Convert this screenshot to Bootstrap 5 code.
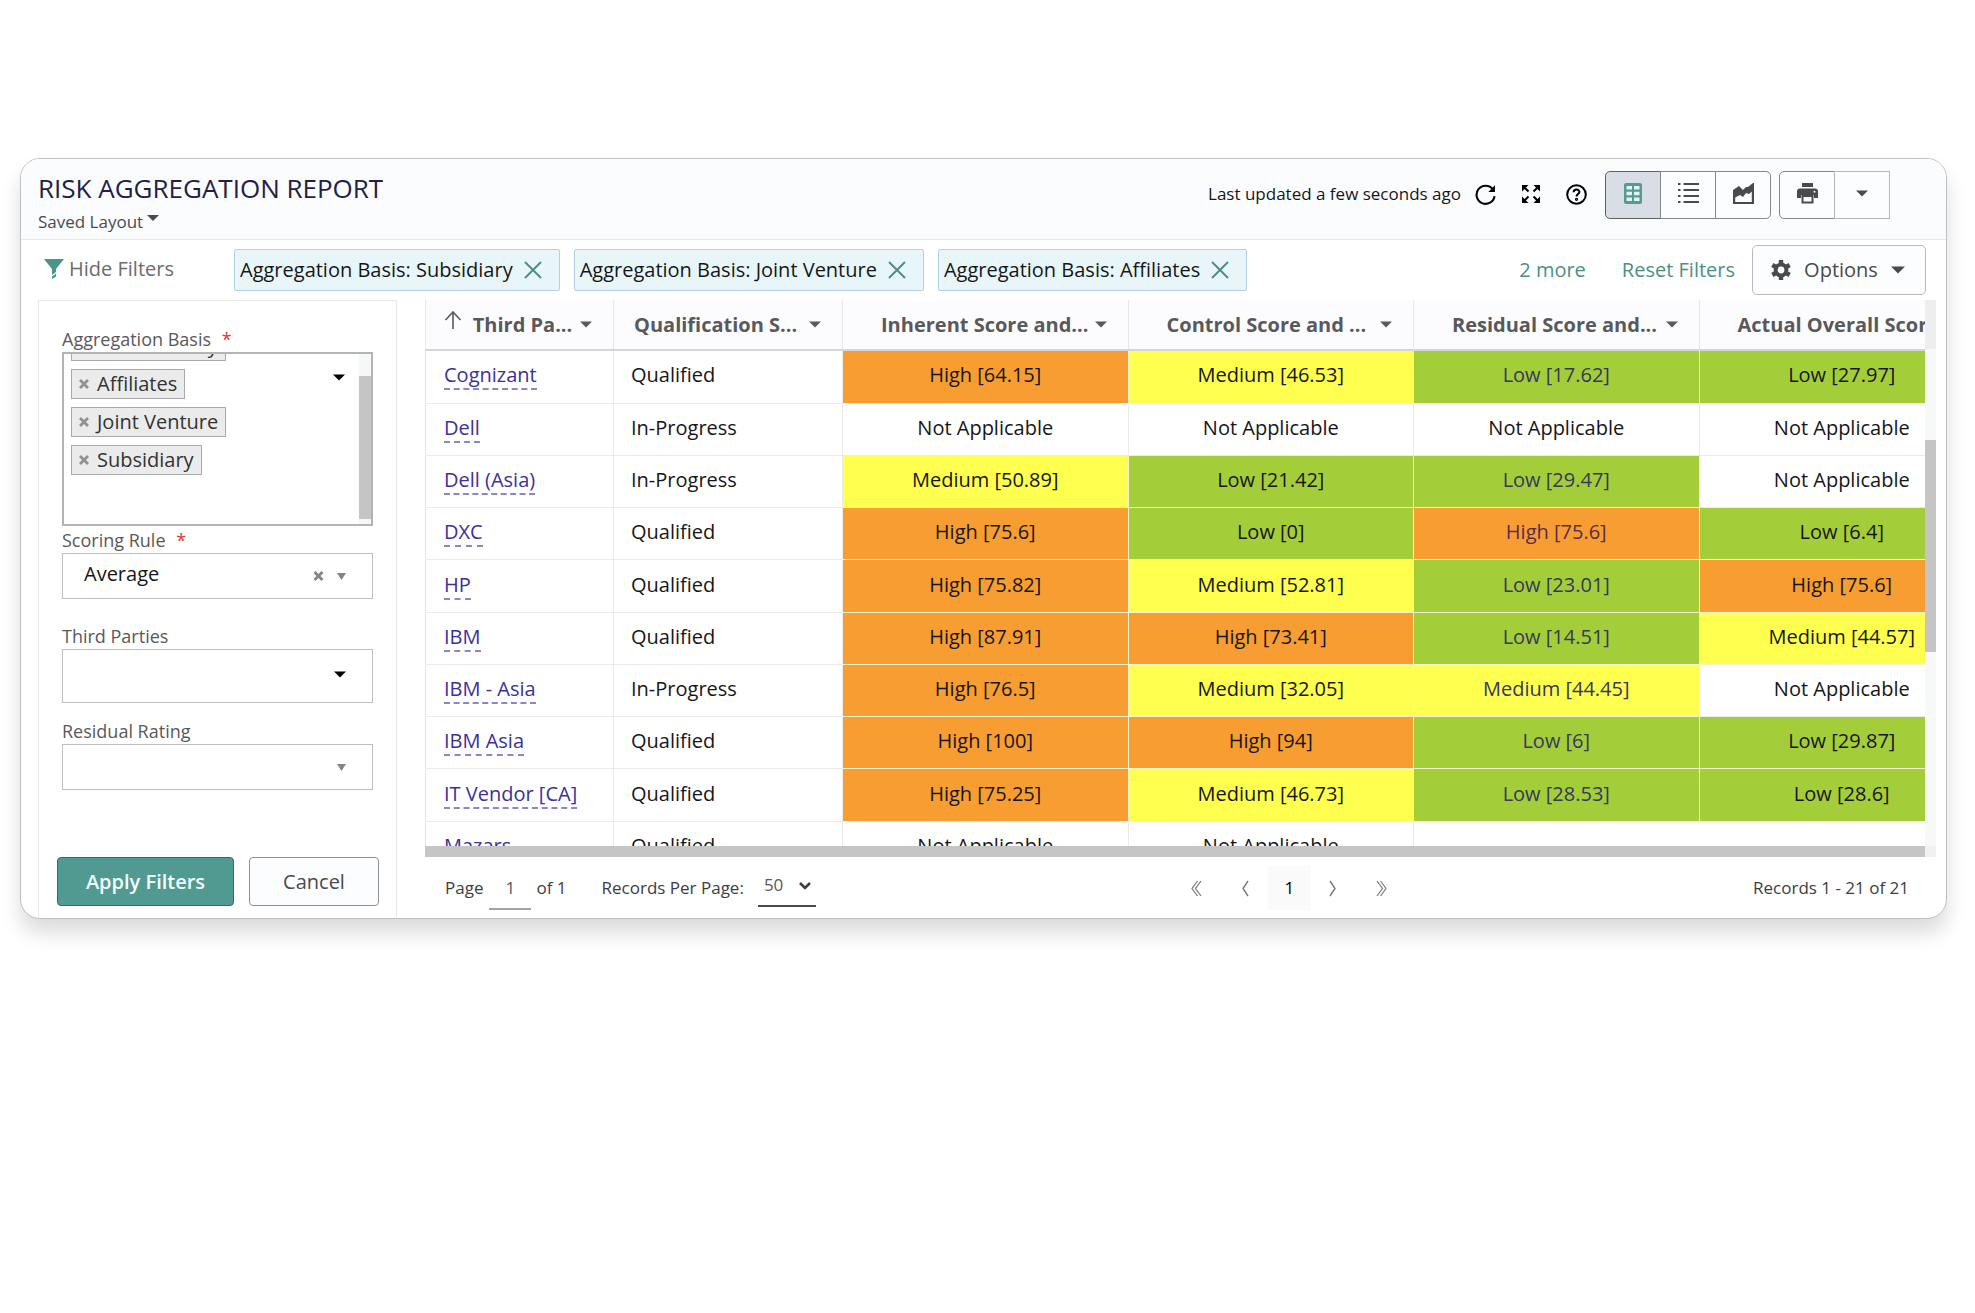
<!DOCTYPE html>
<html lang="en">
<head>
<meta charset="utf-8">
<meta name="viewport" content="width=device-width, initial-scale=1">
<title>Risk Aggregation Report</title>
<link href="https://cdn.jsdelivr.net/npm/bootstrap@5.3.0/dist/css/bootstrap.min.css" rel="stylesheet">
<style>
body{font-family:"Open Sans","Noto Sans",sans-serif;font-size:20px;line-height:28px;color:#161618;background:#fff}
svg{display:block;flex:none}
button{font:inherit;color:inherit}
.report{margin:158px 28px 60px 20px;border:1px solid #bfc0c2;border-radius:20px;background:#fff;overflow:hidden;box-shadow:0 14px 20px rgba(0,0,0,.14)}
.report-head{height:81px;padding:12px 56px 0 17px;background:#fbfcfe;border-bottom:1px solid #e3e9ec}
.report-title{font-size:26px;line-height:34px;font-weight:500;color:#231e46;margin:0 0 5px}
.text-sm17{font-size:17px;line-height:24px}
.saved{color:#4a4a4c;gap:4px}
.plain{border:0;background:none;padding:0}
.tool-set{height:48px}
.tool-set button{width:56px;height:48px;background:#fcfdff;border:1px solid #84888c;display:flex;align-items:center;justify-content:center;color:#4a4a4c;padding:0 0 4px}
.tool-set button+button{margin-left:-1px}
.tool-set button:first-child{border-radius:5px 0 0 5px}
.tool-set .end-round{border-radius:0 5px 5px 0}
.tool-set .pressed{background:#d9dee6;color:#549b92;border-color:#5d6166}
.tool-set .pale{border-color:#b4b8bc}
.status-set{gap:25px;padding-bottom:2px;margin-right:18px}
.status-set .stamp{margin-right:-11px}
.filter-bar{padding:5px 20px 5px 23px}
.hide-link{color:#6b6c6e;width:190px;gap:5px;padding-bottom:2px}
.tealink{color:#4c9083;text-decoration:none;margin-left:36px}
.chip{height:42px;padding:0 17px 0 5px;background:#e8f6f9;border:1px solid #b4d0dd;border-radius:2px;gap:11px}
.chip button{color:#4c9083}
.opt-btn{height:50px;width:174px;border:1px solid #b9babd;border-radius:5px;background:#fcfdff;color:#4a4a4c;padding:0 20px 0 18px;margin-left:17px;font-weight:500}
.side{width:359px;margin-left:17px;height:617px;border:1px solid #e8e9ea;border-bottom:0;padding:26px 23px 11px}
.side label,.side .lbl{font-size:18px;line-height:25px;color:#58595b;display:block}
.star{color:#e0343a;margin-left:6px}
.lb-a{margin-top:2px}.lb-b{margin-top:25px}.lb-c{margin-top:16px}
.box{border:1px solid #bdbebf;background:#fff}
.picker{height:174px;border-width:2px;border-color:#b3b4b5}
.picker-list{overflow:hidden;padding-left:7px}
.picker-tri{margin:20px 14px 0 0}
.tagbox{height:30px;border:1px solid #a9aaab;background:#ebebeb;font-size:20px;line-height:28px;color:#333;padding:0 7px 0 7px;gap:8px;margin-bottom:8px}
.tagbox:first-child{margin-top:-23px}
.tagbox svg{color:#909090}
.track{width:12px;background:#f6f7f7;padding:22px 0 5px}
.thumb{height:100%;background:#c5c5c5}
.pad-box{height:46px;padding:0 26px 0 16px}
.pad-box.tall{height:54px;padding-bottom:3px}
.pad-box select,.pad-box input{border:0;outline:0;appearance:none;background:none;color:#161618;width:0;flex:1;padding:0 4px 4px 5px;height:40px}
.clear-x{color:#858585;margin-right:13px}
.act-row{gap:15px;margin-left:-5px;margin-right:-7px}
.act{height:49px;border-radius:4px;font-size:20px}
.act-go{width:177px;background:#519a92;border:1px solid #2f6f66;color:#f4fffd;font-weight:600}
.act-no{width:130px;background:#fbfdff;border:1px solid #8f9193;color:#4a4a4c;font-weight:500}
.grid-area{margin-left:28px;margin-right:10px}
.grid-view{height:546px;overflow:hidden}
.grid-tbl{width:104%;height:574px;table-layout:fixed;border-collapse:collapse;margin:0}
.col-party{width:188px}.col-qual{width:229px}
.grid-tbl th{height:50px;background:#fcfcfe;border:1px solid #e6e7ea;border-top:0;border-bottom:2px solid #d5d6d8;color:#58595b;font-size:20px;font-weight:700;padding:0;white-space:nowrap}
.grid-tbl th span{display:flex;align-items:center;justify-content:space-between;padding:0 21px 0 38px}
.grid-tbl th .h-party{padding:0 21px 0 18px}
.grid-tbl th .h-qual{padding-left:20px}
.up-arrow{margin-bottom:10px;margin-right:3px}
.grid-tbl td{border:1px solid #ebebec;padding:0 0 3px 17px;white-space:nowrap}
.grid-tbl th:first-child,.grid-tbl td:first-child{border-left-color:#e6e7ea}
.grid-tbl td:first-child{padding-left:18px}
.grid-tbl td.sc{text-align:center;padding:0 0 3px;background-clip:padding-box}
.hi{background-color:#f89d31}.me{background-color:#feff4f}.lo{background-color:#a4cd3a}
.grid-tbl td.hi,.grid-tbl td.me,.grid-tbl td.lo{border-color:#f3f3d0}
.grid-tbl a{color:#3b3199;text-decoration:none;border-bottom:2px dashed #8c86c8}
.grid-tbl .rs{color:#36385e}
.grid-tbl .hi.rs{color:#5a2c50}
.vtrack{width:11px;background:#f7f8f8}
.vtop{height:49px;background:#eeeeee}
.vthumb{height:212px;margin-top:91px;background:#c5c5c5}
.htrack{height:11px;background:#c5c5c5;border-right:11px solid #f0f0f0}
.pager{padding:9px 27px 0 20px;height:61px;color:#3d3d3f}
.pager-in{width:42px;height:44px;border:0;border-bottom:2px solid #a3a3a3;text-align:center;background:none;color:#58595b;padding:0;margin:0 5px 0 6px}
.pager-sel{width:58px;height:38px;border:0;border-bottom:2px solid #4a4a4c;appearance:none;background:none;color:#58595b;padding:0 0 4px 6px}
.per-page{margin-left:35px;margin-right:14px}
.sel-arrow{right:5px;top:13px}
.pages{color:#77787a;gap:40px;margin-left:10px}
.cur{width:44px;height:44px;background:#fafafa;margin:0 -22px}
.rec-count{margin-top:10px}
</style>
<script src="https://cdn.jsdelivr.net/npm/bootstrap@5.3.0/dist/js/bootstrap.bundle.min.js"></script>
</head>
<body>
<svg class="d-none" aria-hidden="true">
<symbol id="tri" viewBox="0 0 14 7"><path d="M0 0h14L7 7z" fill="currentColor"/></symbol>
<symbol id="ex" viewBox="0 0 18 18"><path d="M1 1l16 16M17 1L1 17" stroke="currentColor" stroke-width="2" fill="none"/></symbol>
<symbol id="bx" viewBox="0 0 10 10"><path d="M1 1l8 8M9 1L1 9" stroke="currentColor" stroke-width="2.8" fill="none"/></symbol>
</svg>
<main class="report">
<header class="report-head d-flex justify-content-between">
  <div>
    <h1 class="report-title">RISK AGGREGATION REPORT</h1>
    <button class="plain saved text-sm17 d-flex">Saved Layout <svg class="mt-1" width="12" height="8"><use href="#tri"/></svg></button>
  </div>
  <div class="d-flex align-items-start">
    <div class="d-flex align-items-center tool-set status-set">
      <span class="text-sm17 stamp">Last updated a few seconds ago</span>
      <a href="#" class="text-black" aria-label="Refresh"><svg width="21" height="21" viewBox="0 0 20 20" fill="none" stroke="currentColor" stroke-width="2"><path d="M17 5.2A8.6 8.6 0 1 0 18.600 11.500"/><path d="M19 1.200v6.300h-6.300z" fill="currentColor" stroke="none"/></svg></a>
      <a href="#" class="text-black" aria-label="Full screen"><svg width="20" height="20" viewBox="0 0 20 20" fill="currentColor" stroke="currentColor"><path stroke="none" d="M1 1h6.500L1 7.500zM19 1v6.500L12.500 1zM1 19v-6.500L7.500 19zM19 19h-6.500l6.500-6.500z"/><path stroke-width="2" d="M3 3l4.500 4.500M17 3l-4.500 4.500M3 17l4.500-4.500M17 17l-4.500-4.500"/></svg></a>
      <a href="#" class="text-black" aria-label="Help"><svg width="21" height="21" viewBox="0 0 21 21" fill="none" stroke="currentColor" stroke-width="2"><circle cx="10.500" cy="10.500" r="9.300"/><path d="M7.600 8.200c.2-3.600 5.900-3.400 5.800-.2-.1 2-2.900 2.200-2.900 4.600"/><circle cx="10.500" cy="15.300" r=".6"/></svg></a>
    </div>
    <div class="d-flex tool-set" role="group">
      <button class="pressed" aria-label="Grid"><svg width="18" height="21" viewBox="0 0 18 21"><rect width="18" height="21" rx="2" fill="currentColor"/><path fill="#e8f0f1" d="M2.500 3h5.500v3.500H2.500zM10 3h5.500v3.500H10zM2.500 8.700h5.500v3.500H2.500zM10 8.700h5.500v3.500H10zM2.500 14.400h5.500v3.500H2.500zM10 14.400h5.500v3.500H10z"/></svg></button>
      <button aria-label="List"><svg width="21" height="22" viewBox="0 0 21 22" fill="currentColor"><path d="M0 1h2.500v2H0zM5.500 1H21v2H5.500zM0 7h2.500v2H0zM5.500 7H21v2H5.500zM0 13h2.500v2H0zM5.500 13H21v2H5.500zM0 19h2.500v2H0zM5.500 19H21v2H5.500z"/></svg></button>
      <button class="end-round" aria-label="Chart"><svg width="22" height="21" viewBox="0 0 22 21"><path fill="currentColor" fill-rule="evenodd" d="M1 7l6-4 4 4 3-3h2l5-4h1v21H1zM3.200 14.500V19H19.800V8.500L17 11l-3-1-3 4-3-2z"/></svg></button>
    </div>
    <div class="d-flex tool-set ms-2" role="group">
      <button aria-label="Print"><svg width="21" height="21" viewBox="0 0 21 21" fill="currentColor"><path d="M5 0h11v4H5zM3 5.500h15a3 3 0 0 1 3 3V15h-4v-3H4v3H0V8.500a3 3 0 0 1 3-3z"/><path d="M5.500 13h10v6.500h-10z" fill="#fcfdff" stroke="currentColor" stroke-width="2"/><circle cx="17.500" cy="8.700" r="1" fill="#fff"/></svg></button>
      <button class="pale" aria-label="More"><svg width="12" height="7"><use href="#tri"/></svg></button>
    </div>
  </div>
</header>

<div class="filter-bar d-flex align-items-center">
  <a href="#" class="hide-link d-flex align-items-center text-decoration-none">
    <svg width="20" height="20" viewBox="0 0 20 20" fill="#4a958a"><path d="M0 0h20l-8 10v3l-4 3v-6z"/><path d="M12 14.500v3L8 20v-2.500z"/></svg>Hide Filters</a>
  <div class="d-flex" style="gap:14px">
    <span class="chip d-flex align-items-center">Aggregation Basis: Subsidiary<button class="plain" aria-label="Remove"><svg width="18" height="18"><use href="#ex"/></svg></button></span>
    <span class="chip d-flex align-items-center">Aggregation Basis: Joint Venture<button class="plain" aria-label="Remove"><svg width="18" height="18"><use href="#ex"/></svg></button></span>
    <span class="chip d-flex align-items-center">Aggregation Basis: Affiliates<button class="plain" aria-label="Remove"><svg width="18" height="18"><use href="#ex"/></svg></button></span>
  </div>
  <a href="#" class="tealink ms-auto">2 more</a>
  <a href="#" class="tealink">Reset Filters</a>
  <button class="opt-btn d-flex align-items-center justify-content-between">
    <svg width="20" height="20" viewBox="0 0 20 20"><g fill="none" stroke="currentColor"><circle cx="10" cy="10" r="5.400" stroke-width="4"/><g stroke-width="4.400"><path d="M10 0v4M10 16v4M1.340 5l3.460 2M15.200 13l3.460 2M1.340 15l3.460-2M15.200 7l3.460-2"/></g></g></svg>
    <span>Options</span><svg width="14" height="8"><use href="#tri"/></svg></button>
</div>

<div class="d-flex">
<form class="side d-flex flex-column flex-shrink-0">
  <div class="lbl" id="ab">Aggregation Basis <span class="star">*</span></div>
  <div class="box picker d-flex" role="group" aria-labelledby="ab">
    <div class="picker-list flex-grow-1 d-flex flex-column align-items-start">
      <span class="tagbox d-flex align-items-center flex-shrink-0"><button type="button" class="plain" aria-label="Remove"><svg width="10" height="10"><use href="#bx"/></svg></button>Intermediary</span>
      <span class="tagbox d-flex align-items-center flex-shrink-0"><button type="button" class="plain" aria-label="Remove"><svg width="10" height="10"><use href="#bx"/></svg></button>Affiliates</span>
      <span class="tagbox d-flex align-items-center flex-shrink-0"><button type="button" class="plain" aria-label="Remove"><svg width="10" height="10"><use href="#bx"/></svg></button>Joint Venture</span>
      <span class="tagbox d-flex align-items-center flex-shrink-0"><button type="button" class="plain" aria-label="Remove"><svg width="10" height="10"><use href="#bx"/></svg></button>Subsidiary</span>
    </div>
    <svg class="text-black picker-tri" width="12" height="7"><use href="#tri"/></svg>
    <div class="track"><div class="thumb"></div></div>
  </div>
  <label for="sr" class="lb-a">Scoring Rule <span class="star">*</span></label>
  <div class="box pad-box d-flex align-items-center">
    <select id="sr"><option>Average</option></select>
    <button type="button" class="plain clear-x" aria-label="Clear"><svg width="11" height="10"><use href="#bx"/></svg></button>
    <svg width="9" height="7" viewBox="0 0 9 7"><path d="M0 0h9L4.500 7z" fill="#858585"/></svg>
  </div>
  <label for="tp" class="lb-b">Third Parties</label>
  <div class="box pad-box tall d-flex align-items-center">
    <input id="tp" type="text">
    <svg class="text-black" width="12" height="7"><use href="#tri"/></svg>
  </div>
  <label for="rr" class="lb-c">Residual Rating</label>
  <div class="box pad-box d-flex align-items-center">
    <select id="rr"><option></option></select>
    <svg width="9" height="7" viewBox="0 0 9 7"><path d="M0 0h9L4.500 7z" fill="#858585"/></svg>
  </div>
  <div class="act-row d-flex mt-auto">
    <button type="button" class="act act-go">Apply Filters</button>
    <button type="button" class="act act-no">Cancel</button>
  </div>
</form>

<section class="grid-area flex-grow-1 overflow-hidden">
  <div class="d-flex">
  <div class="grid-view flex-grow-1">
  <table class="grid-tbl">
    <colgroup><col class="col-party"><col class="col-qual"><col><col><col><col></colgroup>
    <thead><tr>
      <th><span class="h-party"><svg class="up-arrow" width="18" height="18" viewBox="0 0 18 18" fill="none" stroke="#58595b" stroke-width="1.600"><path d="M9 18V1M1.500 9L9 1l7.500 8"/></svg>Third Pa...<svg width="12" height="7"><use href="#tri"/></svg></span></th>
      <th><span class="h-qual">Qualification S...<svg width="12" height="7"><use href="#tri"/></svg></span></th>
      <th><span>Inherent Score and...<svg width="12" height="7"><use href="#tri"/></svg></span></th>
      <th><span>Control Score and ...<svg width="12" height="7"><use href="#tri"/></svg></span></th>
      <th><span>Residual Score and...<svg width="12" height="7"><use href="#tri"/></svg></span></th>
      <th><span>Actual Overall Score...</span></th>
    </tr></thead>
    <tbody>
      <tr><td><a href="#">Cognizant</a></td><td>Qualified</td><td class="sc hi">High [64.15]</td><td class="sc me">Medium [46.53]</td><td class="sc lo rs">Low [17.62]</td><td class="sc lo">Low [27.97]</td></tr>
      <tr><td><a href="#">Dell</a></td><td>In-Progress</td><td class="sc">Not Applicable</td><td class="sc">Not Applicable</td><td class="sc">Not Applicable</td><td class="sc">Not Applicable</td></tr>
      <tr><td><a href="#">Dell (Asia)</a></td><td>In-Progress</td><td class="sc me">Medium [50.89]</td><td class="sc lo">Low [21.42]</td><td class="sc lo rs">Low [29.47]</td><td class="sc">Not Applicable</td></tr>
      <tr><td><a href="#">DXC</a></td><td>Qualified</td><td class="sc hi">High [75.6]</td><td class="sc lo">Low [0]</td><td class="sc hi rs">High [75.6]</td><td class="sc lo">Low [6.4]</td></tr>
      <tr><td><a href="#">HP</a></td><td>Qualified</td><td class="sc hi">High [75.82]</td><td class="sc me">Medium [52.81]</td><td class="sc lo rs">Low [23.01]</td><td class="sc hi">High [75.6]</td></tr>
      <tr><td><a href="#">IBM</a></td><td>Qualified</td><td class="sc hi">High [87.91]</td><td class="sc hi">High [73.41]</td><td class="sc lo rs">Low [14.51]</td><td class="sc me">Medium [44.57]</td></tr>
      <tr><td><a href="#">IBM - Asia</a></td><td>In-Progress</td><td class="sc hi">High [76.5]</td><td class="sc me">Medium [32.05]</td><td class="sc me rs">Medium [44.45]</td><td class="sc">Not Applicable</td></tr>
      <tr><td><a href="#">IBM Asia</a></td><td>Qualified</td><td class="sc hi">High [100]</td><td class="sc hi">High [94]</td><td class="sc lo rs">Low [6]</td><td class="sc lo">Low [29.87]</td></tr>
      <tr><td><a href="#">IT Vendor [CA]</a></td><td>Qualified</td><td class="sc hi">High [75.25]</td><td class="sc me">Medium [46.73]</td><td class="sc lo rs">Low [28.53]</td><td class="sc lo">Low [28.6]</td></tr>
      <tr><td><a href="#">Mazars</a></td><td>Qualified</td><td class="sc">Not Applicable</td><td class="sc">Not Applicable</td><td class="sc border-end-0"></td><td class="sc border-start-0"></td></tr>
    </tbody>
  </table>
  </div>
  <div class="vtrack flex-shrink-0 d-flex flex-column"><div class="vtop"></div><div class="vthumb"></div></div>
  </div>
  <div class="htrack"></div>
  <footer class="pager text-sm17 d-flex justify-content-between align-items-start">
    <div class="d-flex align-items-center">
      <label for="pg">Page</label><input id="pg" class="pager-in" value="1">
      <span>of 1</span>
      <label for="rp" class="per-page">Records Per Page:</label>
      <span class="position-relative d-flex"><select id="rp" class="pager-sel"><option>50</option></select>
      <svg class="sel-arrow position-absolute pe-none" width="12" height="8" viewBox="0 0 12 8" fill="none" stroke="#3d3d3f" stroke-width="2.600"><path d="M1 1l5 5 5-5"/></svg></span>
    </div>
    <nav class="pages d-flex align-items-center" aria-label="Pages">
      <a href="#" class="text-reset" aria-label="First"><svg width="11" height="17" viewBox="0 0 11 17" fill="none" stroke="currentColor" stroke-width="1.200"><path d="M6.500 1L1 8.500l5.500 7.500M10 1L4.500 8.500 10 16"/></svg></a>
      <a href="#" class="text-reset" aria-label="Previous"><svg width="7" height="17" viewBox="0 0 7 17" fill="none" stroke="currentColor" stroke-width="1.400"><path d="M6 1L1 8.500 6 16"/></svg></a>
      <span class="cur d-flex align-items-center justify-content-center text-black">1</span>
      <a href="#" class="text-reset" aria-label="Next"><svg width="7" height="17" viewBox="0 0 7 17" fill="none" stroke="currentColor" stroke-width="1.400"><path d="M1 1l5 7.500L1 16"/></svg></a>
      <a href="#" class="text-reset" aria-label="Last"><svg width="11" height="17" viewBox="0 0 11 17" fill="none" stroke="currentColor" stroke-width="1.200"><path d="M1 1l5.500 7.500L1 16M4.500 1L10 8.500 4.500 16"/></svg></a>
    </nav>
    <span class="rec-count">Records 1 - 21 of 21</span>
  </footer>
</section>
</div>
</main>
</body>
</html>
